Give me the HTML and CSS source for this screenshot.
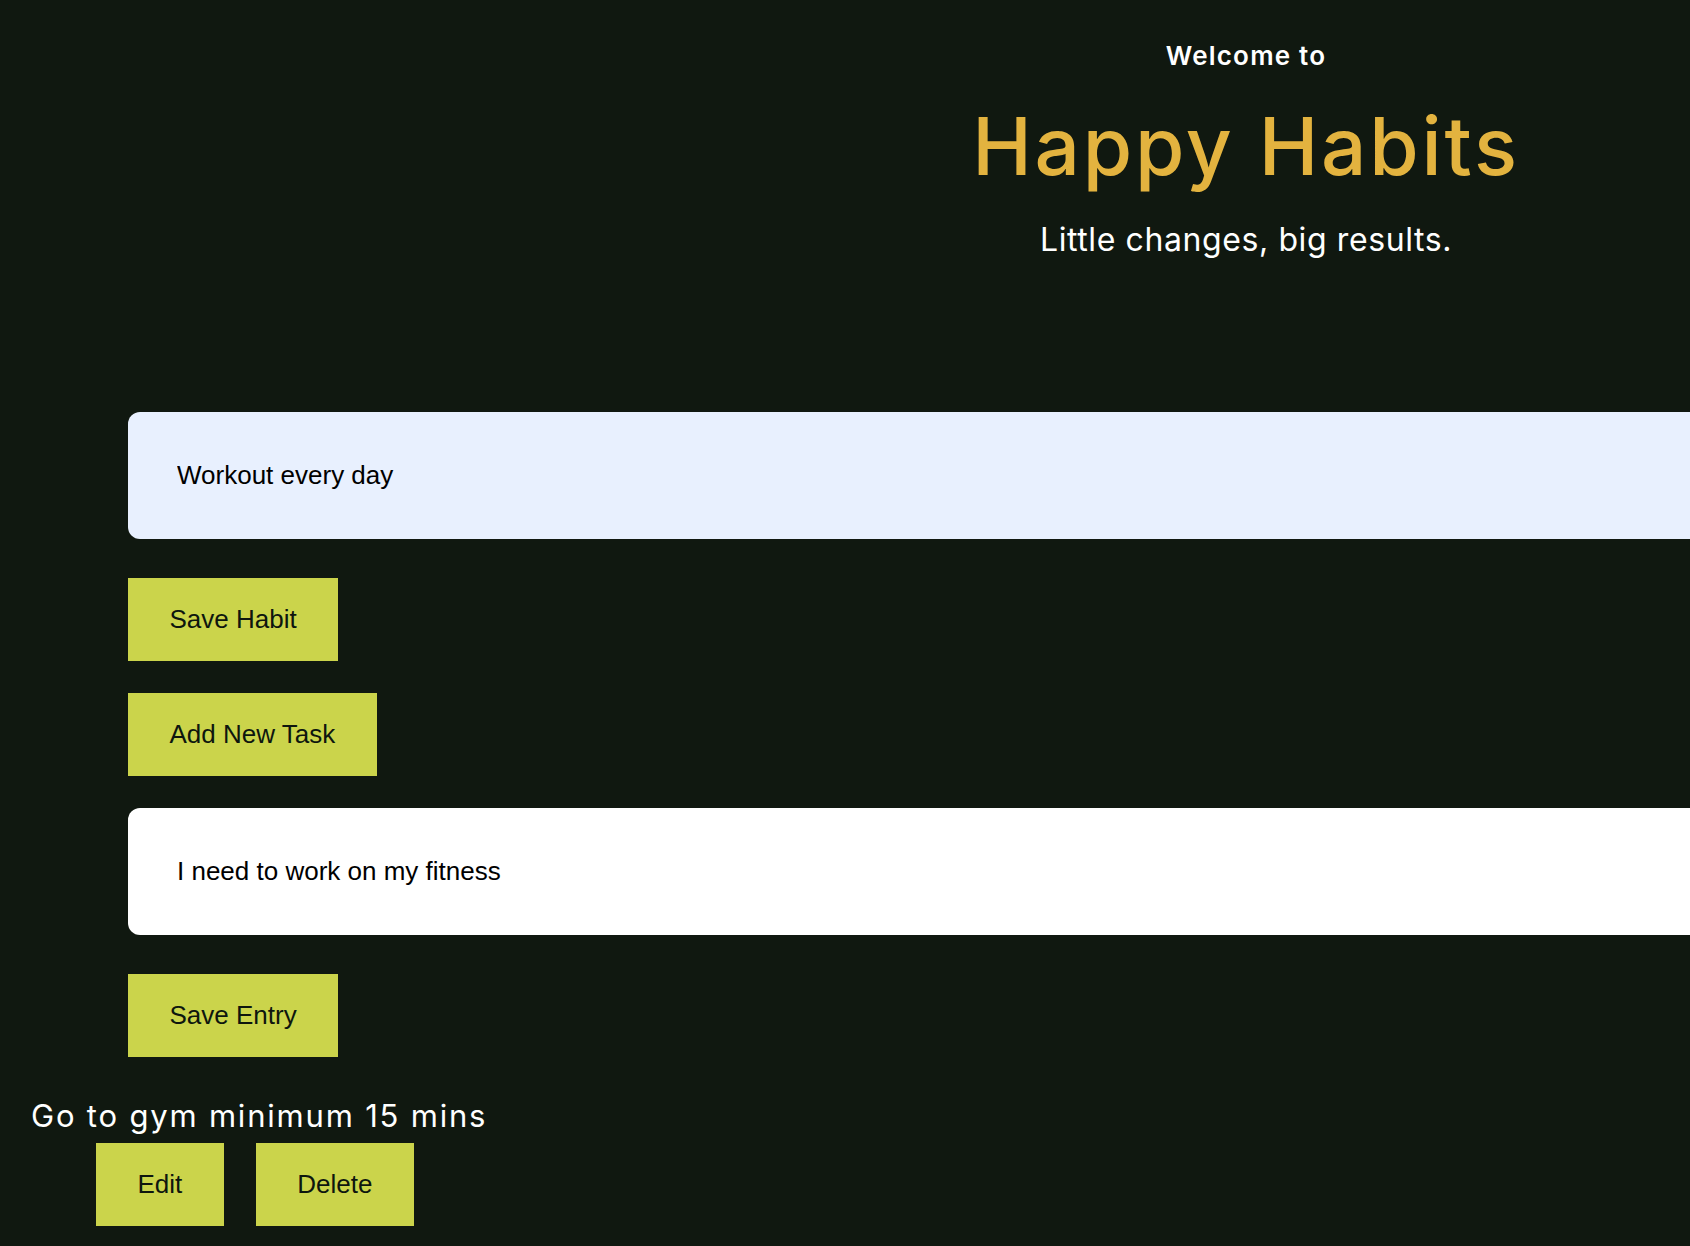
FILE: index.html
```html
<!DOCTYPE html>
<html lang="en">
<head>
<meta charset="utf-8">
<title>Happy Habits</title>
<link rel="stylesheet" href="styles.css">
</head>
<body>
<header class="hero">
  <div class="brand">
    <p class="welcome">Welcome to</p>
    <h1 class="title">Happy Habits</h1>
    <p class="tagline">Little changes, big results.</p>
  </div>
</header>
<main class="app">
  <form class="panel">
    <input class="field field-autofill" type="text" value="Workout every day">
    <button class="btn" type="button">Save Habit</button>
  </form>
  <button class="btn btn-add" type="button">Add New Task</button>
  <form class="panel">
    <input class="field" type="text" value="I need to work on my fitness">
    <button class="btn" type="button">Save Entry</button>
  </form>
  <ul class="habit-list">
    <li class="habit">
      <h2 class="habit-name">Go to gym minimum 15 mins</h2>
      <div class="habit-actions">
        <button class="btn" type="button">Edit</button>
        <button class="btn" type="button">Delete</button>
      </div>
    </li>
  </ul>
</main>
</body>
</html>
```
FILE: styles.css
```css
html, body {
  margin: 0;
  padding: 0;
  overflow: hidden;
  background: #101810;
}

body {
  font-family: "Inter", "Liberation Sans", sans-serif;
  color: #ffffff;
}

.hero {
  display: flex;
  justify-content: flex-end;
  padding-top: 41px;
}

.brand {
  width: 888px;
  display: flex;
  flex-direction: column;
  align-items: center;
  text-align: center;
}

.welcome {
  margin: 0;
  font-size: 26px;
  line-height: 30px;
  font-weight: 600;
  letter-spacing: 1.2px;
}

.title {
  margin: 29px 0 0;
  font-size: 80px;
  line-height: 91px;
  font-weight: 500;
  color: #e3b33f;
  letter-spacing: 2.8px;
}

.tagline {
  margin: 29px 0 0;
  font-size: 32px;
  line-height: 40px;
  font-weight: 400;
  letter-spacing: 0.6px;
}

.app {
  display: flex;
  flex-direction: column;
  align-items: flex-start;
  margin-top: 152px;
}

.panel {
  display: flex;
  flex-direction: column;
  align-items: flex-start;
  gap: 39px;
  margin: 0 0 0 128px;
}

.btn-add {
  margin: 32px 0 32px 128px;
}

.field {
  box-sizing: border-box;
  width: 1640px;
  height: 127px;
  padding: 0 49px;
  border: none;
  border-radius: 12px;
  background: #ffffff;
  color: #000000;
  font-family: "Liberation Sans", Arial, sans-serif;
  font-size: 26px;
  outline: none;
}

.field-autofill {
  background: #e8f0fe;
}

.btn {
  display: block;
  padding: 26px 41.5px;
  border: none;
  border-radius: 0;
  background: #cbd44b;
  color: #0e160e;
  font-family: "Liberation Sans", Arial, sans-serif;
  font-size: 26px;
  line-height: 31px;
  cursor: pointer;
}

.habit-list {
  list-style: none;
  margin: 41px 0 0;
  padding: 0 0 0 31px;
}

.habit-name {
  margin: 0;
  font-size: 31px;
  line-height: 35px;
  font-weight: 400;
  letter-spacing: 1.8px;
}

.habit-actions {
  display: flex;
  gap: 32px;
  margin: 10px 0 0 65px;
}
```
